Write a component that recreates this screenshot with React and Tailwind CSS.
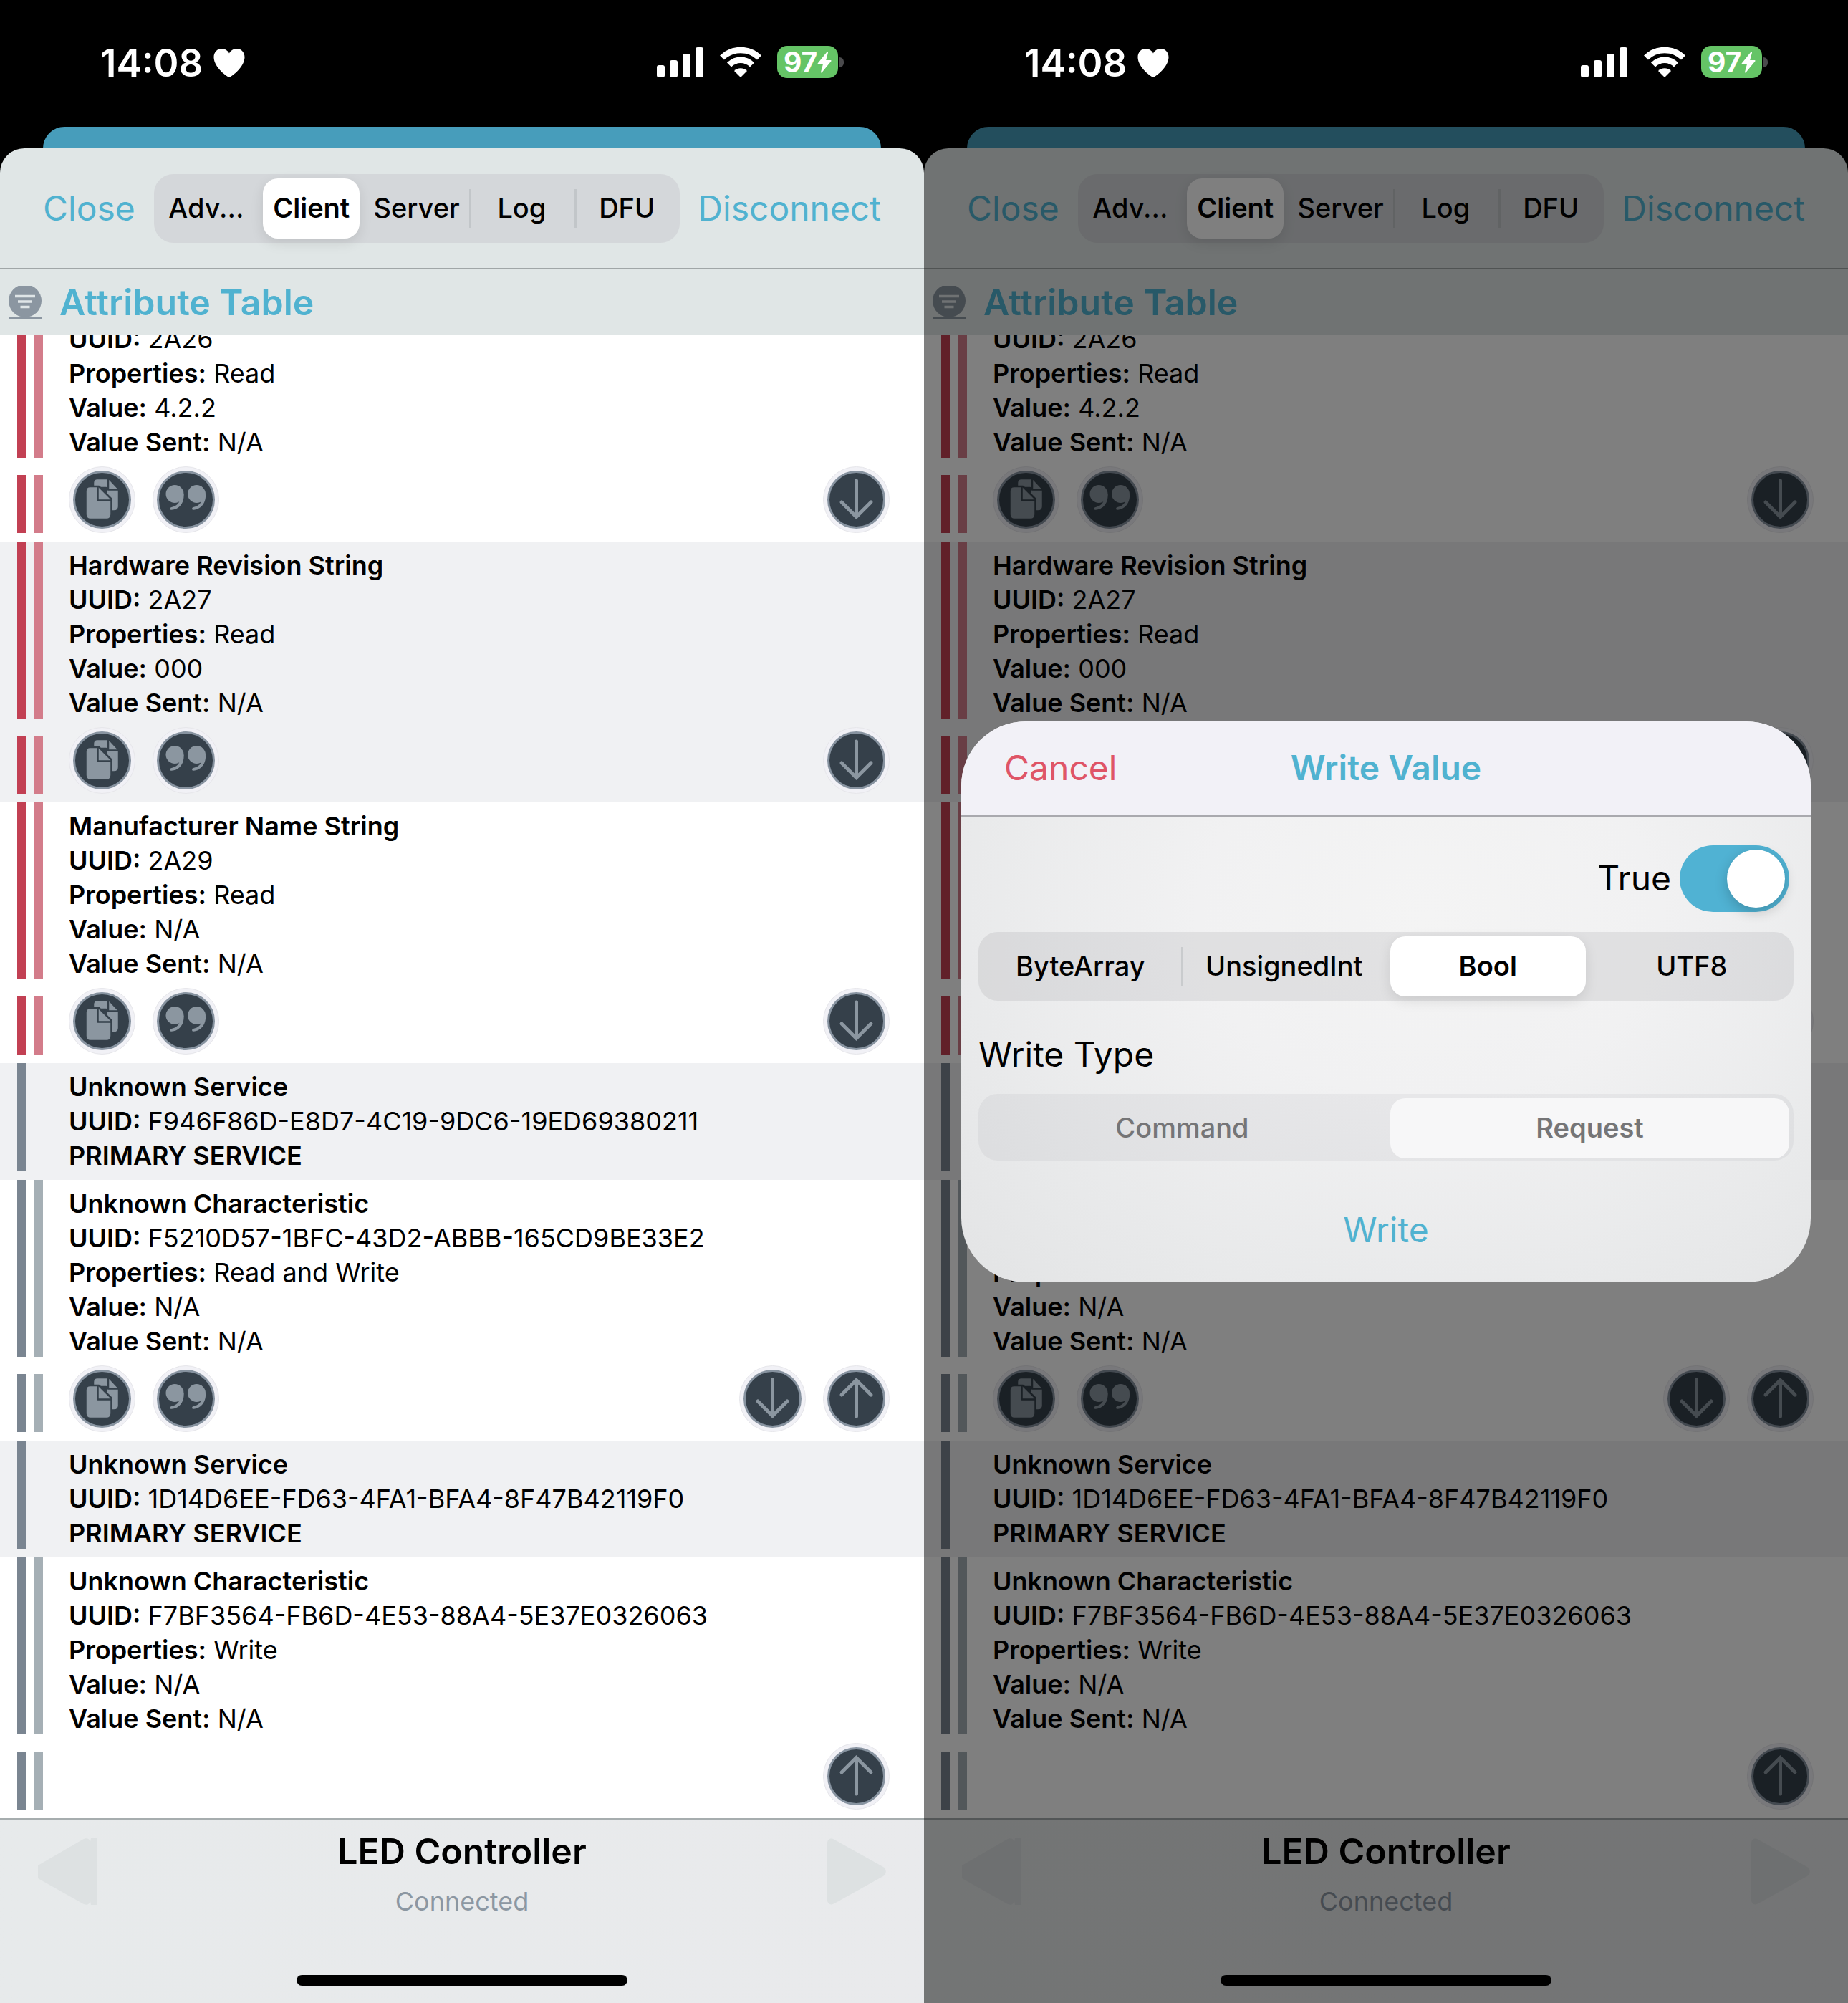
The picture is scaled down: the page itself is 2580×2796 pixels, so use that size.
import React from "react";

function StatusBar() {
  return (
    <div className="relative z-20 flex h-[177px] shrink-0 items-start justify-between pt-[58px] pr-[112px] pl-[140px] text-white">
      <div className="flex items-center gap-[14px]">
        <span className="text-[53px] leading-[60px] font-semibold">14:08</span>
        <svg className="h-[42px] w-[44px]" viewBox="0 0 44 42" fill="currentColor" aria-hidden="true">
          <path d="M22 41 C20 41 .5 27 .5 13 C.5 5.500 5.500 1 11.500 1 C16 1 20 3.500 22 7.500 C24 3.500 28 1 32.500 1 C38.500 1 43.500 5.500 43.500 13 C43.500 27 24 41 22 41 Z" />
        </svg>
      </div>
      <div className="flex h-[57px] items-center gap-[22px]">
        <svg className="h-[42px] w-[66px]" viewBox="0 0 66 42" fill="currentColor" aria-hidden="true">
          <rect x="0" y="25" width="11" height="17" rx="3" />
          <rect x="18" y="18" width="11" height="24" rx="3" />
          <rect x="36" y="9" width="11" height="33" rx="3" />
          <rect x="54" y="0" width="11" height="42" rx="3" />
        </svg>
        <svg className="h-[42px] w-[58px]" viewBox="0 0 58 42" fill="none" stroke="currentColor" aria-hidden="true">
          <path d="M3 14.500 C17.500 0.500 40.500 0.500 55 14.500" strokeWidth="8.500" />
          <path d="M13 24.500 C22 15.500 36 15.500 45 24.500" strokeWidth="8.500" />
          <path d="M20 33 C25 28 33 28 38 33 L29 42 Z" fill="currentColor" stroke="none" />
        </svg>
        <div className="flex items-center gap-[2px]">
          <div className="flex h-[45px] w-[85px] items-center justify-center rounded-[14px] bg-[#65c466]">
            <span className="text-[39px] leading-[45px] font-bold">97</span>
            <svg className="h-[30px] w-[20px]" viewBox="0 0 20 30" fill="currentColor" aria-hidden="true">
              <path d="M13.500 .5 L.8 16.200 C.3 17 .6 17.500 1.400 17.500 H8 L5 28.500 C4.800 29.600 5.800 29.900 6.500 29 L19.300 13.600 C19.900 12.700 19.500 12 18.600 12 H12.200 L15 1.400 C15.200 .3 14.200 -.3 13.500 .5 Z" />
            </svg>
          </div>
          <span className="h-[14px] w-[6px] rounded-r-full bg-[#4a4a4c]" />
        </div>
      </div>
    </div>
  );
}

const tabs = ["Adv...", "Client", "Server", "Log", "DFU"];

function Toolbar() {
  return (
    <header className="flex h-[169px] shrink-0 items-center justify-between border-b-2 border-[#a0a6a7] px-[60px]">
      <button type="button" className="text-[48px] leading-[60px] text-[#50b2d0]">Close</button>
      <div role="tablist" className="grid h-[96px] w-[734px] grid-cols-5 rounded-[27px] bg-[#d4d7da]">
        {tabs.map((t) => (
          <div
            key={t}
            className={
              t === "Log" || t === "DFU"
                ? "relative p-[6px] before:absolute before:top-[21px] before:left-0 before:h-[54px] before:w-[3px] before:bg-[#c2c6c9]"
                : "p-[6px]"
            }
          >
            <button
              type="button"
              role="tab"
              aria-selected={t === "Client"}
              className={
                t === "Client"
                  ? "h-[84px] w-full rounded-[21px] bg-white text-[38px] font-semibold shadow-[0_6px_18px_rgba(0,0,0,0.1)]"
                  : "h-[84px] w-full text-[38px] font-medium"
              }
            >
              {t}
            </button>
          </div>
        ))}
      </div>
      <button type="button" className="text-[48px] leading-[60px] text-[#50b2d0]">Disconnect</button>
    </header>
  );
}

function SectionTitle() {
  return (
    <div className="flex h-[92px] shrink-0 items-center gap-[25px] pl-3">
      <button type="button" aria-label="Filter">
        <svg className="block h-[46px] w-[46px]" viewBox="0 0 46 46" aria-hidden="true">
          <circle cx="23" cy="21" r="23" fill="#8b96a1" />
          <path d="M0 44.500 H46" stroke="#8b96a1" strokeWidth="3" />
          <path d="M9 14.500 H37 M13 22 H33 M16.500 29.500 H29.500" stroke="#dfe5e7" strokeWidth="3.500" />
        </svg>
      </button>
      <h2 className="text-[50px] leading-[60px] font-semibold text-[#50b2d0]">Attribute Table</h2>
    </div>
  );
}

const glyphs = {
  copy: (
    <g fill="#8b96a0" stroke="#35404a" strokeWidth="2.500" strokeLinejoin="round">
      <path d="M40 17 H56 L70 32 V56 C70 60 67 62.500 63 62.500 H52 V30 H34 V23 C34 19 36.500 17 40 17 Z" />
      <path d="M55 17 V32.500 H70" fill="none" />
      <path d="M30 28 H42 L59.500 45.500 V67 C59.500 71.500 57 74 52.500 74 H30.500 C26 74 23.500 71.500 23.500 67 V34.500 C23.500 30.500 26 28 30 28 Z" />
      <path d="M40.500 28 V47.500 H59.500" fill="none" />
    </g>
  ),
  quote: (
    <g fill="#8b96a0">
      <circle cx="31" cy="38.500" r="12.500" />
      <path d="M43.500 38.500 C44.500 50 38 60 26.500 60.800 C24 60.800 24 57.600 26.500 57 C33.500 55.500 37.500 51.500 38 46 Z" />
      <circle cx="61.500" cy="38.500" r="12.500" />
      <path d="M74 38.500 C75 50 68.500 60 57 60.800 C54.500 60.800 54.500 57.600 57 57 C64 55.500 68 51.500 68.500 46 Z" />
    </g>
  ),
  down: <path d="M46.500 20 V70 M26 50 L46.500 70.500 L67 50" fill="none" stroke="#8b96a0" strokeWidth="5" strokeLinecap="round" />,
  up: <path d="M46.500 71 V21 M26 41 L46.500 20.500 L67 41" fill="none" stroke="#8b96a0" strokeWidth="5" strokeLinecap="round" />,
};

function RoundButton({ kind, label }) {
  return (
    <button type="button" aria-label={label} className="block">
      <svg className="block h-[93px] w-[93px]" viewBox="0 0 93 93" aria-hidden="true">
        <circle cx="46.500" cy="46.500" r="46" fill="#f1f1f6" stroke="#e6e6ea" strokeWidth="1" />
        <circle cx="46.500" cy="46.500" r="39" fill="#35404a" stroke="#8793a0" strokeWidth="3" />
        {glyphs[kind]}
      </svg>
    </button>
  );
}

function Bars({ tone, double }) {
  const red = tone === "red";
  return (
    <div className="flex w-[90px] shrink-0 gap-3 self-stretch pl-6">
      <span className={red ? "w-3 bg-[#c24053]" : "w-3 bg-[#7a8591]"} />
      {double && <span className={red ? "w-3 bg-[#d37c8a]" : "w-3 bg-[#a5afb5]"} />}
    </div>
  );
}

const rows = [
  { tone: "red", uuid: "2A26", props: "Read", value: "4.2.2", left: true, actions: ["down"] },
  { tone: "red", uuid: "2A27", props: "Read", value: "000", left: true, actions: ["down"], title: "Hardware Revision String", shade: true },
  { tone: "red", uuid: "2A29", props: "Read", value: "N/A", left: true, actions: ["down"], title: "Manufacturer Name String" },
  { tone: "gray", uuid: "F946F86D-E8D7-4C19-9DC6-19ED69380211", service: true, title: "Unknown Service", shade: true },
  { tone: "gray", uuid: "F5210D57-1BFC-43D2-ABBB-165CD9BE33E2", props: "Read and Write", value: "N/A", left: true, actions: ["down", "up"], title: "Unknown Characteristic" },
  { tone: "gray", uuid: "1D14D6EE-FD63-4FA1-BFA4-8F47B42119F0", service: true, title: "Unknown Service", shade: true },
  { tone: "gray", uuid: "F7BF3564-FB6D-4E53-88A4-5E37E0326063", props: "Write", value: "N/A", actions: ["up"], title: "Unknown Characteristic" },
];

function Field({ name, children }) {
  return (
    <p>
      <b className="font-semibold">{name}:</b> {children}
    </p>
  );
}

function Row({ row }) {
  return (
    <li className={row.shade ? "shrink-0 bg-[#f0f1f3] pb-3" : "shrink-0 bg-white pb-3"}>
      <div className="flex">
        <Bars tone={row.tone} double={!row.service} />
        <div className="-mb-[2px] pt-[9px] pl-[6px] text-[36px] leading-[48px]">
          {row.title && <h3 className="font-semibold">{row.title}</h3>}
          <Field name="UUID">{row.uuid}</Field>
          {row.service ? (
            <p className="font-semibold">PRIMARY SERVICE</p>
          ) : (
            <>
              <Field name="Properties">{row.props}</Field>
              <Field name="Value">{row.value}</Field>
              <Field name="Value Sent">N/A</Field>
            </>
          )}
        </div>
      </div>
      {row.actions && (
        <div className="mt-3 flex pr-12">
          <div className="flex pt-3">
            <Bars tone={row.tone} double />
          </div>
          <div className="flex flex-1 gap-6 pl-[6px]">
            {row.left && (
              <>
                <RoundButton kind="copy" label="Copy" />
                <RoundButton kind="quote" label="Quote" />
              </>
            )}
          </div>
          <div className="flex h-[93px] gap-6">
            {row.actions.map((a) => (
              <RoundButton key={a} kind={a} label={a === "down" ? "Read" : "Write"} />
            ))}
          </div>
        </div>
      )}
    </li>
  );
}

function Footer() {
  return (
    <footer className="flex h-[258px] shrink-0 flex-col items-center justify-between border-t-2 border-[#a6adae] bg-linear-to-r from-[#e7eaeb] to-[#e9eaec] pb-6">
      <div className="flex w-full items-start justify-between px-[52px] pt-[14px]">
        <button type="button" aria-label="Previous" className="mt-3">
          <svg className="block h-[93px] w-[84px]" viewBox="0 0 84 93" fill="#dde1e2" aria-hidden="true">
            <path d="M1 38 L63 2 C68 -1 73 0 74 5 L75 0 H84 V93 H75 L74 88 C73 93 68 94 63 91 L1 56 Z" />
          </svg>
        </button>
        <div className="text-center">
          <h1 className="text-[50px] leading-[60px] font-semibold">LED Controller</h1>
          <p className="mt-4 text-[36px] leading-[48px] text-[#8c97a2]">Connected</p>
        </div>
        <button type="button" aria-label="Next" className="mt-3">
          <svg className="block h-[93px] w-[84px]" viewBox="0 0 84 93" fill="#dde1e2" aria-hidden="true">
            <path d="M1 7 C1 1 6 -1 11 2 L79 40 C84 43 84 50 79 53 L11 91 C6 94 1 92 1 86 Z" />
          </svg>
        </button>
      </div>
      <span className="h-[15px] w-[462px] rounded-full bg-black" />
    </footer>
  );
}

function Choice({ group, options, selected, disabled }) {
  return (
    <fieldset
      disabled={disabled}
      className={
        disabled
          ? "flex h-[93px] rounded-[27px] bg-[#767680]/8"
          : "flex h-[96px] rounded-[27px] bg-[#767680]/14"
      }
    >
      <legend className="sr-only">{group}</legend>
      {options.map((o, i) => (
        <div
          key={o}
          className={
            i === 1 && !disabled
              ? "relative flex-1 basis-0 p-[6px] before:absolute before:top-[21px] before:-left-[2px] before:h-[54px] before:w-[3px] before:bg-[#c9cbcd]"
              : "flex-1 basis-0 p-[6px]"
          }
        >
          <label
            className={
              "relative flex h-[84px] items-center justify-center rounded-[21px] text-[38px] font-medium " +
              (disabled
                ? "text-[#757577] has-checked:bg-[#f7f7f8] has-checked:font-semibold"
                : "text-black has-checked:bg-white has-checked:font-semibold has-checked:shadow-[0_6px_18px_rgba(0,0,0,0.1)]")
            }
          >
            <input type="radio" name={group} defaultChecked={o === selected} className="absolute inset-0 appearance-none" />
            {o}
          </label>
        </div>
      ))}
    </fieldset>
  );
}

function WriteDialog() {
  return (
    <div className="absolute inset-0 z-10 flex items-center bg-black/50 px-[52px]">
      <div role="dialog" aria-label="Write Value" className="w-full overflow-hidden rounded-[90px] bg-[radial-gradient(ellipse_at_55%_35%,#f4f4f4_0%,#f1f1f2_35%,#e8e9ea_75%,#e3e4e5_100%)]">
        <div className="grid h-[133px] grid-cols-3 items-center border-b-2 border-[#a9a9ae] bg-[#f2f1f7] px-[60px]">
          <button type="button" className="justify-self-start text-[48px] leading-[60px] text-[#df5567]">Cancel</button>
          <h2 className="text-center text-[48px] leading-[60px] font-semibold whitespace-nowrap text-[#50b2d0]">Write Value</h2>
        </div>
        <div className="px-6 pt-10 pb-[43px]">
          <label className="flex items-center justify-end gap-3 pr-[6px] text-[48px] leading-[60px]">
            True
            <input
              type="checkbox"
              role="switch"
              defaultChecked
              className="flex h-[93px] w-[153px] appearance-none items-center rounded-full bg-[#c9c9cd] p-[6px] before:block before:size-[81px] before:rounded-full before:bg-white before:shadow-[0_6px_18px_rgba(0,0,0,0.2)] checked:justify-end checked:bg-[#50b2d3]"
            />
          </label>
          <div className="mt-7">
            <Choice group="Value format" options={["ByteArray", "UnsignedInt", "Bool", "UTF8"]} selected="Bool" />
          </div>
          <p className="mt-[45px] mb-[25px] text-[48px] leading-[60px]">Write Type</p>
          <Choice group="Write type" options={["Command", "Request"]} selected="Request" disabled />
          <button type="button" className="mx-auto mt-[67px] block text-[48px] leading-[60px] text-[#50b2d0]">Write</button>
        </div>
      </div>
    </div>
  );
}

function Phone({ dialog }) {
  return (
    <section className="relative flex h-full min-w-0 flex-1 flex-col overflow-hidden bg-black">
      <StatusBar />
      <div className="mx-[60px] h-[30px] shrink-0 rounded-t-[30px] bg-[#479dbb]" />
      <div className="flex min-h-0 flex-1 flex-col overflow-hidden rounded-t-[34px] bg-[#e0e6e6]">
        <Toolbar />
        <SectionTitle />
        <ul className="flex min-h-0 flex-1 flex-col justify-end overflow-hidden bg-white">
          {rows.map((row) => (
            <Row key={row.uuid} row={row} />
          ))}
        </ul>
        <Footer />
      </div>
      {dialog && <WriteDialog />}
    </section>
  );
}

export default function App() {
  return (
    <main className="flex h-screen w-full font-['Inter',sans-serif] text-black">
      <Phone />
      <Phone dialog />
    </main>
  );
}
